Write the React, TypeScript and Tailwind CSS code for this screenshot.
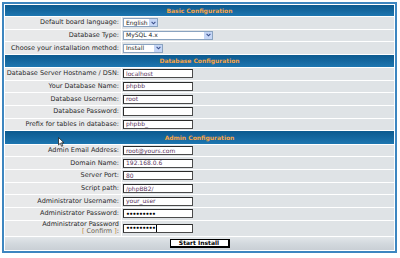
import React from "react";

const font = { fontFamily: '"DejaVu Sans", Verdana, sans-serif' };

function Header({ title }: { title: string }) {
  return (
    <div className="h-[12px] flex items-center justify-center bg-gradient-to-b from-[#0c5a8f] via-[#14679f] to-[#1d76b0]">
      <span className="text-[6px] font-bold text-[#f7a446] leading-none">{title}</span>
    </div>
  );
}

function Row({ label, children, tall }: { label: React.ReactNode; children: React.ReactNode; tall?: boolean }) {
  return (
    <div className={`grid grid-cols-[116px_1fr] gap-x-[1px] ${tall ? "h-[15px]" : "h-[11.67px]"}`}>
      <div className="bg-[#e8e9ea] flex items-center justify-end pr-[2px] text-[6.5px] leading-[7px] text-[#2a2a2a] text-right">
        {label}
      </div>
      <div className="bg-[#dfe3e6] flex items-center pl-[1px]">{children}</div>
    </div>
  );
}

function TextInput({ value, password, caret }: { value: string; password?: boolean; caret?: boolean }) {
  return (
    <div className="w-[70px] h-[9px] bg-white border border-[#4a4a4a] border-t-[#2a2a2a] border-l-[#2a2a2a] flex items-center pl-[2px] overflow-hidden">
      {password ? (
        <span className="text-[6px] leading-none text-black font-bold tracking-[-0.6px]">
          {value}
          {caret && <span className="inline-block w-[1px] h-[7px] bg-black align-middle ml-[1px]" />}
        </span>
      ) : (
        <span className="text-[6px] leading-none text-[#5a3560]">{value}</span>
      )}
    </div>
  );
}

function Select({ value, width }: { value: string; width: number }) {
  return (
    <div
      className="h-[9px] bg-white border border-[#8aa3c0] flex items-center justify-between overflow-hidden"
      style={{ width }}
    >
      <span className="text-[6px] leading-none text-[#222] pl-[2px]">{value}</span>
      <span className="w-[8px] h-full bg-[#c5d6f6] flex items-center justify-center">
        <svg width="5" height="4" viewBox="0 0 5 4">
          <path d="M0.6 0.8 L2.5 2.8 L4.4 0.8" stroke="#3a4f8a" strokeWidth="1.1" fill="none" />
        </svg>
      </span>
    </div>
  );
}

export default function App() {
  return (
    <div className="w-[400px] h-[258px] bg-white relative overflow-hidden" style={font}>
      <div className="ml-[2px] mt-[2px] w-[395px] border-2 border-[#3d86c0] bg-white p-[1px] flex flex-col gap-[1px]">
        <div className="h-[11px] flex items-center justify-center bg-gradient-to-b from-[#0c5a8f] via-[#14679f] to-[#1d76b0]">
          <span className="text-[6px] font-bold text-[#f7a446] leading-none">Basic Configuration</span>
        </div>
        <Row label="Default board language:">
          <Select value="English" width={35} />
        </Row>
        <Row label="Database Type:">
          <Select value="MySQL 4.x" width={90} />
        </Row>
        <Row label="Choose your installation method:">
          <Select value="Install" width={40} />
        </Row>
        <Header title="Database Configuration" />
        <Row label="Database Server Hostname / DSN:">
          <TextInput value="localhost" />
        </Row>
        <Row label="Your Database Name:">
          <TextInput value="phpbb" />
        </Row>
        <Row label="Database Username:">
          <TextInput value="root" />
        </Row>
        <Row label="Database Password:">
          <TextInput value="" />
        </Row>
        <Row label="Prefix for tables in database:">
          <TextInput value="phpbb_" />
        </Row>
        <div className="h-[12.5px] flex items-center justify-center bg-gradient-to-b from-[#0c5a8f] via-[#14679f] to-[#1d76b0]">
          <span className="text-[6px] font-bold text-[#f7a446] leading-none">Admin Configuration</span>
        </div>
        <Row label="Admin Email Address:">
          <TextInput value="root@yours.com" />
        </Row>
        <Row label="Domain Name:">
          <TextInput value="192.168.0.6" />
        </Row>
        <Row label="Server Port:">
          <TextInput value="80" />
        </Row>
        <Row label="Script path:">
          <TextInput value="/phpBB2/" />
        </Row>
        <Row label="Administrator Username:">
          <TextInput value="your_user" />
        </Row>
        <Row label="Administrator Password:">
          <TextInput value="•••••••••" password />
        </Row>
        <Row
          tall
          label={
            <span>
              Administrator Password
              <br />
              <span className="text-[#c0853c]">[ </span>
              <span className="text-[#6d6555]">Confirm</span>
              <span className="text-[#c0853c]"> ]</span>:
            </span>
          }
        >
          <TextInput value="•••••••••" password caret />
        </Row>
        <div className="h-[13px] flex items-center justify-center bg-gradient-to-b from-[#e2e6e9] via-[#d3d9de] to-[#c9cfd5]">
          <div className="w-[60px] h-[9px] bg-white border border-black border-r-2 border-b-2 flex items-center justify-center">
            <span className="text-[6px] font-bold leading-none text-black">Start Install</span>
          </div>
        </div>
      </div>
      <svg className="absolute left-[58px] top-[137px]" width="7" height="10" viewBox="0 0 7 10">
        <path d="M0.5 0.5 L0.5 8 L2.3 6.3 L3.6 9.3 L4.8 8.8 L3.5 5.8 L6 5.8 Z" fill="white" stroke="#222" strokeWidth="0.8" strokeLinejoin="round" />
      </svg>
    </div>
  );
}
